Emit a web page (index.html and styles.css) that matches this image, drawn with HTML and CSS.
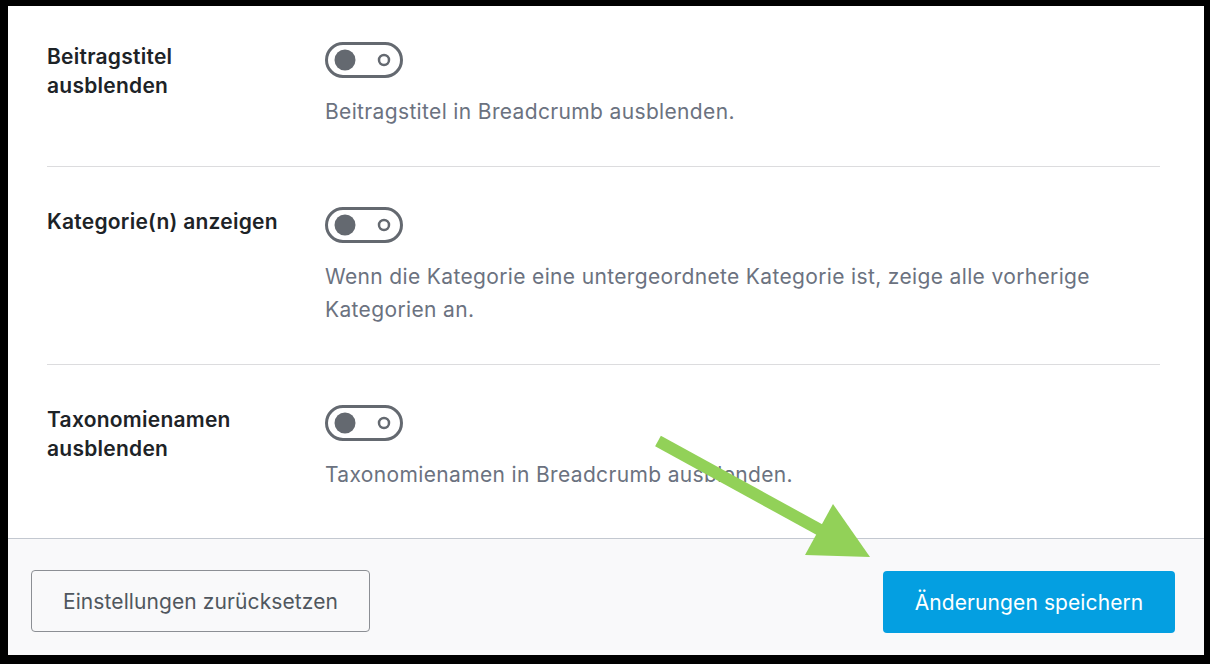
FILE: index.html
```html
<!DOCTYPE html>
<html lang="de">
<head>
<meta charset="utf-8">
<title>Breadcrumb Einstellungen</title>
<link rel="stylesheet" href="styles.css">
</head>
<body>
<div class="panel">
  <div class="settings">
    <div class="row">
      <div class="label">Beitragstitel<br>ausblenden</div>
      <div class="control">
        <svg class="toggle" width="78" height="36" viewBox="0 0 78 36"><rect x="1.5" y="1.5" width="75" height="33" rx="16.5" fill="none" stroke="#646970" stroke-width="3"/><circle cx="20" cy="18" r="10.5" fill="#646970"/><circle cx="59" cy="18" r="5" fill="none" stroke="#646970" stroke-width="2.5"/></svg>
        <p class="desc">Beitragstitel in Breadcrumb ausblenden.</p>
      </div>
    </div>
    <div class="row">
      <div class="label">Kategorie(n) anzeigen</div>
      <div class="control">
        <svg class="toggle" width="78" height="36" viewBox="0 0 78 36"><rect x="1.5" y="1.5" width="75" height="33" rx="16.5" fill="none" stroke="#646970" stroke-width="3"/><circle cx="20" cy="18" r="10.5" fill="#646970"/><circle cx="59" cy="18" r="5" fill="none" stroke="#646970" stroke-width="2.5"/></svg>
        <p class="desc">Wenn die Kategorie eine untergeordnete Kategorie ist, zeige alle vorherige Kategorien an.</p>
      </div>
    </div>
    <div class="row">
      <div class="label">Taxonomienamen<br>ausblenden</div>
      <div class="control">
        <svg class="toggle" width="78" height="36" viewBox="0 0 78 36"><rect x="1.5" y="1.5" width="75" height="33" rx="16.5" fill="none" stroke="#646970" stroke-width="3"/><circle cx="20" cy="18" r="10.5" fill="#646970"/><circle cx="59" cy="18" r="5" fill="none" stroke="#646970" stroke-width="2.5"/></svg>
        <p class="desc">Taxonomienamen in Breadcrumb ausblenden.</p>
      </div>
    </div>
  </div>
  <div class="footer">
    <button class="btn btn-reset">Einstellungen zurücksetzen</button>
    <button class="btn btn-save">Änderungen speichern</button>
  </div>
</div>
<svg class="arrow" width="1210" height="664" viewBox="0 0 1210 664">
  <line x1="658" y1="441" x2="822" y2="531" stroke="#92d158" stroke-width="12"/>
  <polygon points="833,504 805,555 870,557" fill="#92d158"/>
</svg>
</body>
</html>
```
FILE: styles.css
```css
html, body {
  margin: 0;
  padding: 0;
  background: #000;
  width: 1210px;
  height: 664px;
  overflow: hidden;
  font-family: Inter, "Liberation Sans", sans-serif;
}
.panel {
  position: relative;
  margin: 6px 0 0 8px;
  width: 1196px;
  height: 649px;
  background: #fff;
  display: flex;
  flex-direction: column;
  overflow: hidden;
}
.settings {
  flex: 1;
  padding: 0 44px 0 39px;
  overflow: hidden;
}
.row {
  display: grid;
  grid-template-columns: 278px 1fr;
  padding: 40px 0 38px;
  border-bottom: 1px solid #dcdcde;
}
.row:first-child {
  padding-top: 36px;
}
.row:last-child {
  border-bottom: none;
}
.label {
  font-size: 21px;
  font-weight: 600;
  line-height: 29px;
  letter-spacing: 0.25px;
  color: #1d2327;
}
.control {
  display: flex;
  flex-direction: column;
  align-items: flex-start;
}
.toggle {
  display: block;
}
.desc {
  margin: 17px 0 0;
  font-size: 21px;
  line-height: 33px;
  letter-spacing: 0.35px;
  color: #6b7280;
}
.footer {
  height: 117px;
  box-sizing: border-box;
  border-top: 1px solid #c3c8d0;
  background: #f9f9fa;
  padding: 31px 29px 24px 23px;
  display: flex;
  justify-content: space-between;
  align-items: flex-start;
}
.btn {
  font-family: Inter, "Liberation Sans", sans-serif;
  font-size: 21px;
  letter-spacing: 0.1px;
  height: 62px;
  border-radius: 4px;
  cursor: pointer;
}
.btn-reset {
  width: 339px;
  background: #f9f9fa;
  border: 1px solid #8c8f94;
  color: #50575e;
}
.btn-save {
  width: 292px;
  background: #049fe1;
  border: none;
  color: #fff;
  margin-top: 1px;
}
.arrow {
  position: absolute;
  top: 0;
  left: 0;
  pointer-events: none;
}
```
